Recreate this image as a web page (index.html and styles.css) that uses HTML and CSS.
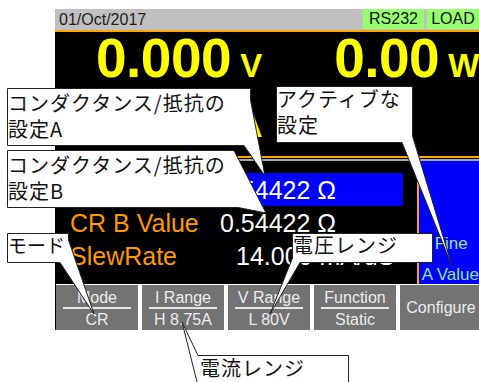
FILE: index.html
```html
<!DOCTYPE html>
<html lang="ja">
<head>
<meta charset="utf-8">
<title>CR mode screen</title>
<link rel="stylesheet" href="styles.css">
</head>
<body>
<div class="stage">
  <div class="screen">
    <div class="status">
      <span class="date">01/Oct/2017</span>
      <span class="badge b-rs">RS232</span>
      <span class="badge b-load">LOAD</span>
    </div>
    <div class="readout">
      <div class="meters">
        <div class="meter"><span class="num">0.000</span><span class="unit">V</span></div>
        <div class="meter m2"><span class="num">0.00</span><span class="unit">W</span></div>
      </div>
      <div class="active-mark">A</div>
    </div>
    <div class="divider"></div>
    <div class="settings">
      <div class="params">
        <div class="row sel"><span class="label">CR A Value</span><span class="val">0.54422 Ω</span></div>
        <div class="row"><span class="label">CR B Value</span><span class="val">0.54422 Ω</span></div>
        <div class="row"><span class="label">SlewRate</span><span class="val slew">14.000 mA/uS</span></div>
      </div>
      <div class="side">
        <span class="fine">Fine</span>
        <span class="aval">A Value</span>
      </div>
    </div>
    <div class="softkeys">
      <div class="key"><span class="k-top">Mode</span><span class="k-sep"></span><span class="k-bot">CR</span></div>
      <div class="key"><span class="k-top">I Range</span><span class="k-sep"></span><span class="k-bot">H 8.75A</span></div>
      <div class="key"><span class="k-top">V Range</span><span class="k-sep"></span><span class="k-bot">L 80V</span></div>
      <div class="key"><span class="k-top">Function</span><span class="k-sep"></span><span class="k-bot">Static</span></div>
      <div class="key single"><span class="k-top">Configure</span></div>
    </div>
  </div>

  <svg class="callouts" width="479" height="382" viewBox="0 0 479 382">
    <path class="co" d="M7.5,88.5 H250.5 V100 L265,176 L244,145.5 H7.5 Z"/>
    <path class="co" d="M7.5,150.5 H234 L266,213 L238,207.5 H7.5 Z"/>
    <path class="co" d="M276.5,86.5 H412.5 V136 L452,266 L402,142.5 H276.5 Z"/>
    <path class="co" d="M7.5,233.5 H68.5 V240 L94,314 L60,262.5 H7.5 Z"/>
    <path class="co" d="M292.5,233.5 H432.5 V262.5 H300 L270,314 L292.5,258 Z"/>
    <path class="co" d="M182,322 L198,355.5 H348.5 V400 H197 V382 Z"/>
  </svg>

  <div class="note n-a">コンダクタンス/抵抗の<br>設定A</div>
  <div class="note n-b">コンダクタンス/抵抗の<br>設定B</div>
  <div class="note n-act">アクティブな<br>設定</div>
  <div class="note n-mode">モード</div>
  <div class="note n-volt">電圧レンジ</div>
  <div class="note n-curr">電流レンジ</div>
</div>
</body>
</html>
```

FILE: styles.css
```css
html, body {
  margin: 0;
  background: #fff;
}

body {
  font-family: "Liberation Sans", Arial, sans-serif;
}

.stage {
  position: relative;
  width: 479px;
  height: 382px;
  overflow: hidden;
  padding-top: 9px;
  box-sizing: border-box;
}

.screen {
  margin-left: 55px;
  width: 424px;
  overflow: hidden;
  background: #000;
}

/* status bar */
.status {
  display: flex;
  align-items: flex-start;
  height: 21px;
  background: #c0c0c0;
  border-bottom: 2px solid #ffa500;
}

.date {
  flex: 1;
  padding-left: 4px;
  font-size: 16px;
  line-height: 21px;
  color: #1c1c1c;
}

.badge {
  height: 20px;
  background: #96ff6e;
  color: #111;
  font-size: 16px;
  line-height: 20px;
  text-align: center;
}

.b-rs {
  width: 61px;
  margin-right: 3px;
}

.b-load {
  width: 52px;
}

/* readout */
.readout {
  height: 124px;
}

.meters {
  display: flex;
  align-items: baseline;
  padding-left: 41px;
  height: 52px;
}

.meter {
  display: flex;
  align-items: baseline;
  color: #ffff00;
  font-weight: bold;
}

.m2 {
  margin-left: 72px;
}

.num {
  font-size: 55px;
  line-height: 52px;
  letter-spacing: -0.5px;
}

.unit {
  font-size: 33px;
  line-height: 36px;
  margin-left: 9px;
}

.active-mark {
  margin-top: 24px;
  margin-left: 183px;
  color: #ffff00;
  font-weight: bold;
  font-size: 34px;
  line-height: 34px;
}

.divider {
  height: 1px;
  background: #000;
  border-top: 2px solid #ffa500;
  border-bottom: 2px solid #a8a8a8;
}

/* settings */
.settings {
  display: flex;
  height: 123px;
}

.params {
  width: 364px;
  padding-top: 12px;
  padding-left: 7px;
  box-sizing: border-box;
}

.row {
  display: flex;
  width: 341px;
  height: 33px;
  font-size: 25px;
  line-height: 35px;
  white-space: nowrap;
}

.row.sel {
  background: #0000ff;
}

.label {
  width: 150px;
  padding-left: 8px;
  color: #ff9900;
}

.row.sel .label {
  color: #fff;
}

.val {
  color: #fff;
}

.val.slew {
  margin-left: 16px;
}

.side {
  flex: 1;
  display: flex;
  flex-direction: column;
  justify-content: flex-end;
  background: #0000ff;
  border-left: 2px solid #ffa500;
  color: #8fe88f;
  font-size: 17px;
  line-height: 18px;
  white-space: nowrap;
}

.fine {
  margin-left: 16px;
  margin-bottom: 13px;
}

.aval {
  margin-left: 3px;
}

/* soft keys */
.softkeys {
  display: flex;
  gap: 4px;
  padding-top: 1px;
  background: #fff;
  border-left: 1px solid #000;
}

.key {
  flex: 0 0 82px;
  height: 45px;
  display: flex;
  flex-direction: column;
  align-items: stretch;
  background: #737373;
  color: #ececec;
  font-size: 16px;
  text-align: center;
  white-space: nowrap;
}

.k-top {
  padding-top: 3px;
  line-height: 19px;
}

.k-sep {
  height: 2px;
  margin: 0 7px;
  background: #e6e6e6;
}

.k-bot {
  margin-top: 1px;
  line-height: 19px;
}

.key.single {
  justify-content: center;
}

.key.single .k-top {
  padding-top: 0;
}

/* callouts */
.callouts {
  position: absolute;
  left: 0;
  top: 0;
}

.co {
  fill: #fff;
  stroke: #222;
  stroke-width: 1;
}

.note {
  position: absolute;
  font-family: "Noto Sans CJK JP", "Liberation Sans", sans-serif;
  font-size: 20px;
  line-height: 26px;
  letter-spacing: 1px;
  color: #111;
  white-space: nowrap;
}

.n-a {
  left: 8px;
  top: 90px;
}

.n-b {
  left: 8px;
  top: 152px;
}

.n-act {
  left: 277px;
  top: 86px;
}

.n-mode {
  left: 8px;
  top: 232px;
  font-size: 19px;
  letter-spacing: 0;
}

.n-volt {
  left: 293px;
  top: 232px;
}

.n-curr {
  left: 200px;
  top: 355px;
}
```
